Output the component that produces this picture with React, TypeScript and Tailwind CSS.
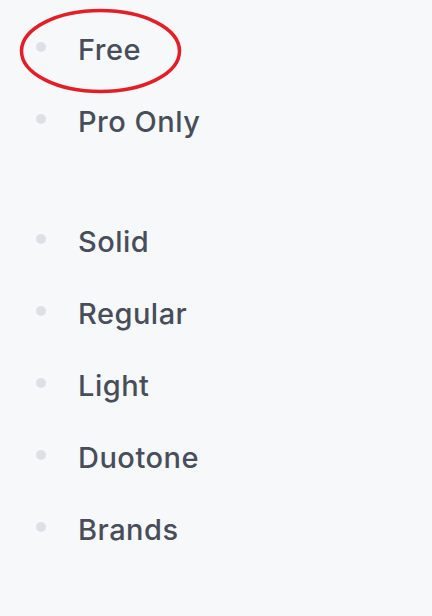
import React from 'react';

const groups: string[][] = [
    ['Free', 'Pro Only'],
    ['Solid', 'Regular', 'Light', 'Duotone', 'Brands'],
];

const Item: React.FC<{ label: string }> = ({ label }) => (
    <li className="flex items-center h-[72px]">
        <span className="ml-[36px] w-[10px] h-[10px] rounded-full bg-[#dde0e5] -mt-[4px]" />
        <span className="ml-[32px] mt-[2px] text-[29px] font-medium tracking-[0.5px] text-[#474e5a]">{label}</span>
    </li>
);

export default function App() {
    return (
        <div className="relative w-[432px] h-[616px] bg-[#f7f8fa] overflow-hidden" style={{ fontFamily: 'Inter, "Open Sans", sans-serif' }}>
            <div className="pt-[13px] flex flex-col gap-[48px]">
                {groups.map((items, i) => (
                    <ul key={i} className="flex flex-col">
                        {items.map(label => (
                            <Item key={label} label={label} />
                        ))}
                    </ul>
                ))}
            </div>
            <svg className="absolute left-0 top-0" width="200" height="110" viewBox="0 0 200 110">
                <ellipse cx="100.5" cy="51" rx="79" ry="40.5" fill="none" stroke="#e41e26" strokeWidth="3.5" />
            </svg>
        </div>
    );
}
